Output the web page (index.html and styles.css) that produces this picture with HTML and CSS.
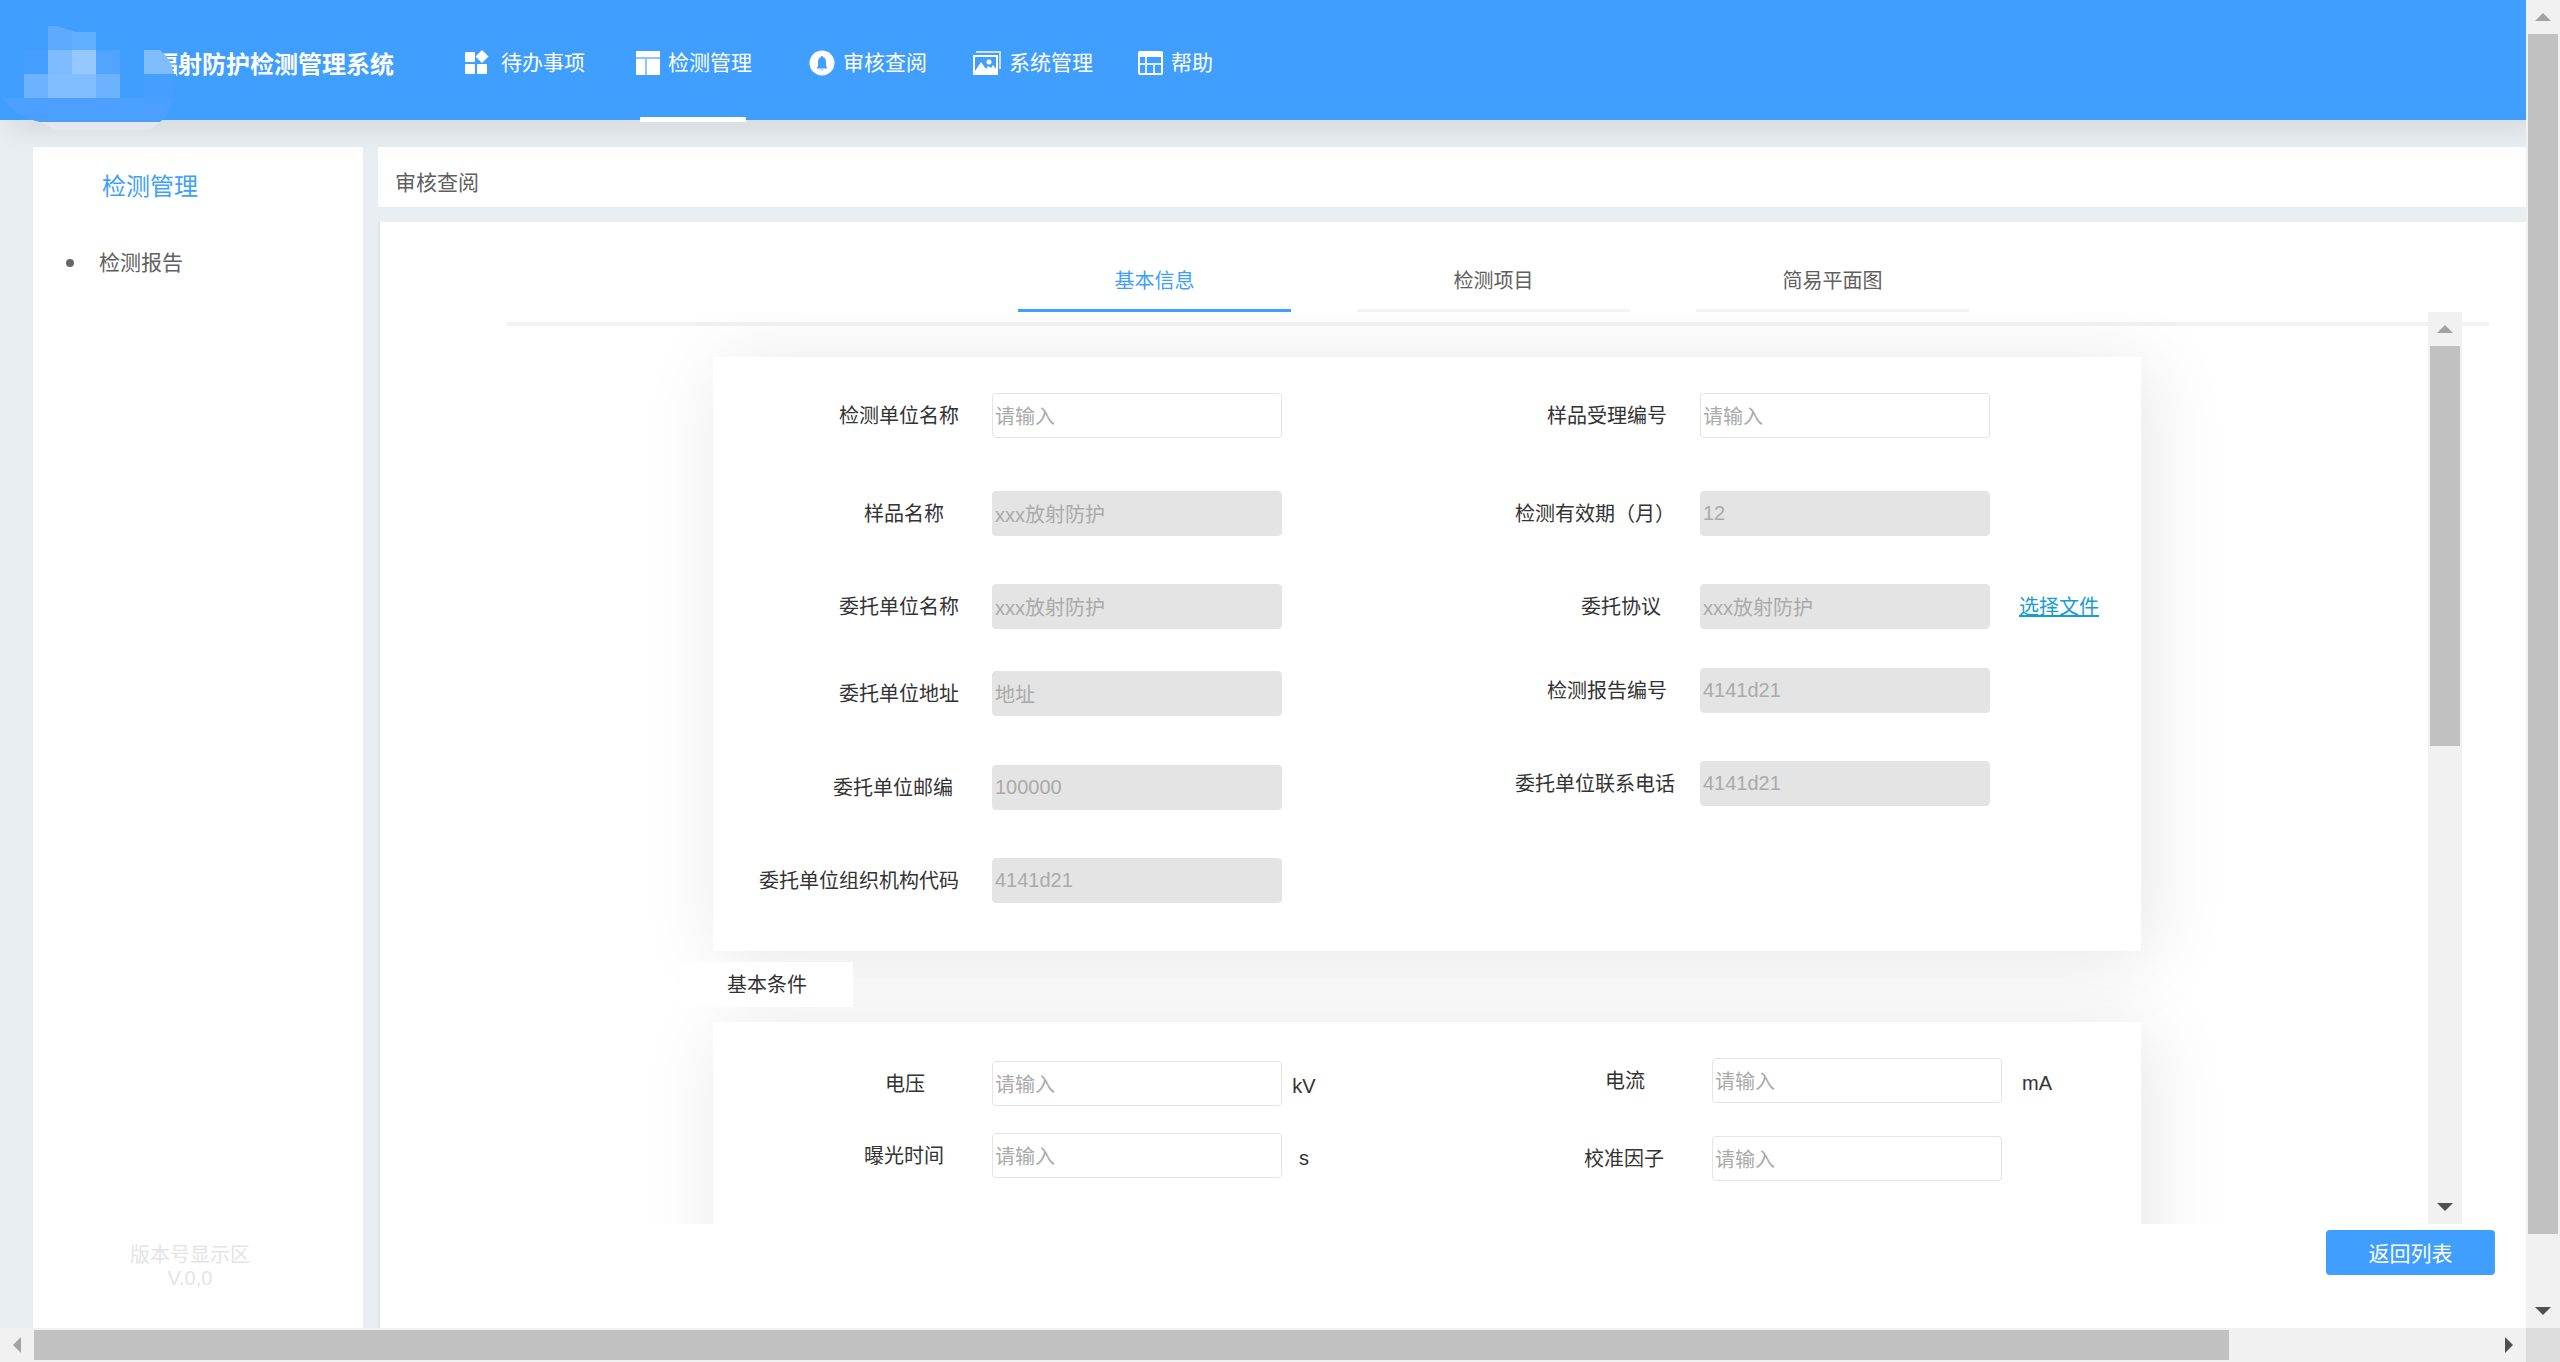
FILE: index.html
```html
<!DOCTYPE html>
<html lang="zh-CN">
<head>
<meta charset="utf-8">
<title>辐射防护检测管理系统</title>
<link rel="stylesheet" href="styles.css">
</head>
<body>
<div class="window">
  <div class="page">
    <header class="header">
      <h1 class="brand">辐射防护检测管理系统</h1>
      <svg class="brand-logo" width="176" height="132" viewBox="0 0 176 132" aria-hidden="true">
        <path d="M40 122h120l-10 8H56z" fill="#e4e8ee"/>
        <path d="M2 98h172c-2 10-7 18-14 24H40C24 119 10 110 2 98z" fill="#4b9ffe"/>
        <path d="M144 74h32q0 14-3 24h-29z" fill="#449fff"/>
        <path d="M48 26h8l20 6h20v18H48z" fill="#5cabff"/>
        <path d="M72 32h24v18H72z" fill="#60aeff"/>
        <path d="M24 50h24v24H24z" fill="#459fff"/>
        <path d="M48 50h24v24H48z" fill="#7fbcff"/>
        <path d="M72 50h24v24H72z" fill="#94c8ff"/>
        <path d="M96 50h24v24H96z" fill="#51a4ff"/>
        <path d="M24 74h24v24H24z" fill="#6cb2ff"/>
        <path d="M48 74h48v24H48z" fill="#81beff"/>
        <path d="M96 74h24v24H96z" fill="#6cb2ff"/>
        <path d="M144 50h16q11 9 14 24h-30z" fill="#80bdff"/>
      </svg>
      <nav class="nav">
        <a class="nav-item" href="#">
          <svg class="nav-icon nav-icon-wide" width="26" height="26" viewBox="0 0 26 26" fill="#fff" aria-hidden="true"><rect x="0" y="2" width="10" height="10" rx="1"/><path d="M17 0l6.500 6.500-6.500 6.500-6.500-6.500z"/><rect x="0" y="14" width="10" height="10" rx="1"/><rect x="12" y="14" width="10" height="10" rx="1"/></svg>待办事项</a>
        <a class="nav-item nav-item-active" href="#">
          <svg class="nav-icon" width="24" height="26" viewBox="0 0 24 26" fill="#fff" aria-hidden="true"><path d="M0 1h24v6H0zM0 9h9v16H0zM11 9h13v16H11z"/><path d="M0 1h24v24H0z" opacity=".4"/></svg>检测管理</a>
        <a class="nav-item" href="#">
          <svg class="nav-icon" width="26" height="26" viewBox="0 0 26 26" aria-hidden="true"><circle cx="13" cy="13" r="12.500" fill="#fff"/><path d="M13 6c.8 0 1 .5 1 1 2 .7 3 2.500 3 5v4l1.500 2.500h-11L9 16v-4c0-2.500 1-4.300 3-5 0-.5.200-1 1-1zM11.500 19.500h3c0 1-3 1-3 0z" fill="#409eff"/></svg>审核查阅</a>
        <a class="nav-item" href="#">
          <svg class="nav-icon" width="28" height="26" viewBox="0 0 28 26" fill="none" stroke="#fff" aria-hidden="true"><path d="M3 2h24v17" stroke-width="2" stroke-opacity=".7"/><rect x="1" y="6" width="23" height="18" stroke-width="2"/><path d="M2 21l6-9 5 7 2-3 3 2 2-3 4 5v4H2z" fill="#fff" stroke="none"/><circle cx="16" cy="12" r="2.500" fill="#fff" stroke="none"/></svg>系统管理</a>
        <a class="nav-item" href="#">
          <svg class="nav-icon" width="25" height="26" viewBox="0 0 25 26" fill="none" stroke="#fff" stroke-width="2" aria-hidden="true"><rect x="1" y="2" width="23" height="22" rx="1"/><path d="M1 3h23v3H1z" fill="#fff"/><path d="M1 14h23M8 6v18M16 14v10" stroke-opacity=".8"/></svg>帮助</a>
      </nav>
    </header>

    <div class="body">
      <aside class="sidebar">
        <h2 class="sidebar-title">检测管理</h2>
        <ul class="menu"><li class="menu-item"><a class="menu-link" href="#">检测报告</a></li></ul>
        <p class="version">版本号显示区<br>V.0,0</p>
      </aside>

      <main class="main">
        <div class="crumb">审核查阅</div>
        <section class="panel">
          <div class="tabs" role="tablist">
            <button class="tab tab-active" type="button" role="tab">基本信息</button>
            <button class="tab" type="button" role="tab">检测项目</button>
            <button class="tab" type="button" role="tab">简易平面图</button>
          </div>

          <div class="scroll-area">
            <form class="scroll-view" id="report">
              <div class="card card-basic">
                <div class="col col-basic-left">
                  <div class="field"><label class="label" for="f1">检测单位名称</label><input class="input" id="f1" placeholder="请输入"></div>
                  <div class="field field-far"><label class="label" for="f2">样品名称</label><input class="input" id="f2" value="xxx放射防护" disabled></div>
                  <div class="field"><label class="label" for="f3">委托单位名称</label><input class="input" id="f3" value="xxx放射防护" disabled></div>
                  <div class="field"><label class="label" for="f4">委托单位地址</label><input class="input" id="f4" value="地址" disabled></div>
                  <div class="field field-mid"><label class="label" for="f5">委托单位邮编</label><input class="input" id="f5" value="100000" disabled></div>
                  <div class="field"><label class="label" for="f6">委托单位组织机构代码</label><input class="input" id="f6" value="4141d21" disabled></div>
                </div>
                <div class="col col-basic-right">
                  <div class="field"><label class="label" for="g1">样品受理编号</label><input class="input" id="g1" placeholder="请输入"></div>
                  <div class="field field-near"><label class="label" for="g2">检测有效期（月）</label><input class="input" id="g2" value="12" disabled></div>
                  <div class="field field-mid"><label class="label" for="g3">委托协议</label><input class="input" id="g3" value="xxx放射防护" disabled><a class="file-link" href="#">选择文件</a></div>
                  <div class="field"><label class="label" for="g4">检测报告编号</label><input class="input" id="g4" value="4141d21" disabled></div>
                  <div class="field field-near"><label class="label" for="g5">委托单位联系电话</label><input class="input" id="g5" value="4141d21" disabled></div>
                </div>
              </div>

              <h3 class="section-tag">基本条件</h3>

              <div class="card card-conditions">
                <div class="col col-cond-left">
                  <div class="field field-farther"><label class="label" for="h1">电压</label><input class="input" id="h1" placeholder="请输入"><span class="unit">kV</span></div>
                  <div class="field field-far"><label class="label" for="h2">曝光时间</label><input class="input" id="h2" placeholder="请输入"><span class="unit">s</span></div>
                </div>
                <div class="col col-cond-right">
                  <div class="field field-farther"><label class="label" for="k1">电流</label><input class="input" id="k1" placeholder="请输入"><span class="unit unit-wide">mA</span></div>
                  <div class="field field-far"><label class="label" for="k2">校准因子</label><input class="input" id="k2" placeholder="请输入"></div>
                </div>
              </div>
            </form>
            <div class="bar bar-y bar-inner" aria-hidden="true">
              <span class="arrow arrow-up"></span>
              <div class="track"><div class="thumb"></div></div>
              <span class="arrow arrow-down"></span>
            </div>
          </div>

          <div class="actions"><button class="back" type="button">返回列表</button></div>
        </section>
      </main>
    </div>
  </div>

  <div class="bar bar-y bar-page" aria-hidden="true">
    <span class="arrow arrow-up"></span>
    <div class="track"><div class="thumb"></div></div>
    <span class="arrow arrow-down"></span>
  </div>
  <div class="bar bar-x" aria-hidden="true">
    <span class="arrow arrow-left"></span>
    <div class="track"><div class="thumb"></div></div>
    <span class="arrow arrow-right"></span>
  </div>
  <div class="corner"></div>
</div>
</body>
</html>
```
FILE: styles.css
```css
* { box-sizing: border-box; }

body {
  margin: 0;
  background: #e9eef2;
  color: #333;
  font-family: "Liberation Sans", "Noto Sans CJK SC", sans-serif;
  font-size: 20px;
  line-height: 24px;
}

h1, h2, h3, p, ul { margin: 0; padding: 0; font-weight: 400; }
ul { list-style: none; }
a { color: inherit; text-decoration: none; }
button, input { font: inherit; }

.window {
  display: grid;
  grid-template: minmax(0, 1fr) 34px / minmax(0, 1fr) 34px;
  height: 100vh;
}

.page {
  display: flex;
  flex-direction: column;
  overflow: hidden;
}

/* Header */
.header {
  position: relative;
  display: flex;
  flex: none;
  height: 120px;
  padding-left: 154px;
  background: #409eff;
  box-shadow: 8px 8px 30px rgba(0, 0, 0, .1);
  color: #fff;
}

.brand {
  width: 311px;
  padding-top: 10px;
  font-size: 24px;
  font-weight: 700;
  line-height: 110px;
}

.brand-logo { position: absolute; top: 0; left: 0; }

.nav {
  display: grid;
  grid-template-columns: 171px 173px 164px 165px auto;
}

.nav-item {
  position: relative;
  display: flex;
  align-items: center;
  justify-self: start;
  gap: 8px;
  padding-top: 6px;
  font-size: 21px;
}

.nav-icon-wide { margin-right: 2px; }

.nav-item-active::after {
  content: "";
  position: absolute;
  right: 6px;
  bottom: -2px;
  left: 4px;
  height: 5px;
  border-radius: 1px;
  background: #fff;
}

/* Columns under the header */
.body {
  display: flex;
  flex: 1;
  gap: 15px;
  min-height: 0;
  padding: 27px 0 0 33px;
}

.sidebar {
  display: flex;
  flex: none;
  flex-direction: column;
  width: 330px;
  background: #fff;
}

.sidebar-title {
  padding: 28px 0 0 69px;
  color: #409eff;
  font-size: 24px;
}

.menu { padding-top: 52px; }

.menu-item {
  display: flex;
  align-items: center;
  gap: 25px;
  padding-left: 33px;
  color: #606060;
  font-size: 21px;
}

.menu-item::before {
  content: "";
  width: 8px;
  height: 8px;
  border-radius: 50%;
  background: #666;
}

.version {
  margin-top: auto;
  padding: 0 16px 38px 0;
  color: #e4e4e4;
  line-height: 23px;
  text-align: center;
}

.main {
  display: flex;
  flex: 1;
  flex-direction: column;
  gap: 15px;
  min-width: 0;
}

.crumb {
  flex: none;
  padding: 24px 17px 12px;
  background: #fff;
  color: #606060;
  font-size: 21px;
}

.panel {
  display: flex;
  flex: 1;
  flex-direction: column;
  min-height: 0;
  padding: 0 37px 53px 127px;
  border-left: 2px solid #e4e4e4;
  background: #fff;
}

.tabs {
  display: flex;
  flex: none;
  justify-content: center;
  gap: 66px;
  padding: 30px 9px 0 0;
}

.tab {
  width: 273px;
  padding: 17px 0 16px;
  border: 0;
  border-bottom: 3px solid #f2f2f2;
  background: none;
  color: #606060;
}

.tab-active { border-color: #409eff; color: #409eff; }

/* Scrolling form */
.scroll-area {
  position: relative;
  display: flex;
  flex: 1;
  min-height: 0;
  padding-right: 27px;
}

.scroll-area::before {
  content: "";
  position: absolute;
  top: 10px;
  right: 0;
  left: 0;
  height: 4px;
  background: #f2f2f2;
}

.scroll-view {
  position: relative;
  z-index: 0;
  flex: 1;
  overflow: hidden;
  padding: 45px 287px 0 206px;
}

.card {
  position: relative;
  display: flex;
  background: #fff;
}

.card::before {
  content: "";
  position: absolute;
  z-index: -1;
  inset: 0;
  box-shadow: 8px 8px 75px rgba(0, 0, 0, .1);
}

.card-basic { min-height: 594px; }
.card-conditions { min-height: 300px; }

.col { display: grid; align-content: start; }
.col-basic-left { width: 569px; padding-top: 36px; grid-template-rows: 98px 93px 87px 94px 93px auto; }
.col-basic-right { width: 708px; padding-top: 36px; grid-template-rows: 98px 93px 84px 93px auto; }
.col-cond-left { width: 569px; padding-top: 39px; grid-template-rows: 72px auto; }
.col-cond-right { width: 720px; padding-top: 36px; grid-template-rows: 78px auto; }

.field {
  display: grid;
  grid-template-columns: minmax(0, 1fr) 290px 0;
  align-items: center;
  align-self: start;
  white-space: nowrap;
}

.label { padding-right: 33px; text-align: right; }
.field-near .label { padding-right: 25px; }
.field-mid .label { padding-right: 39px; }
.field-far .label { padding-right: 48px; }
.field-farther .label { padding-right: 67px; }

.input {
  width: 290px;
  height: 45px;
  padding: 3px 2px 0;
  border: 1px solid #e4e4e4;
  border-radius: 4px;
  background: #fff;
  color: #333;
}

.input::placeholder { color: #aaa; opacity: 1; }
.input:disabled { padding-top: 0; background: #e4e4e4; color: #aaa; }

.unit { width: 44px; padding-top: 5px; text-align: center; }
.unit-wide { width: 70px; }

.file-link {
  padding-left: 29px;
  color: #169bd5;
  text-decoration: underline;
}

.section-tag {
  position: relative;
  width: 172px;
  margin: 11px 0 15px -32px;
  padding: 11px 0 10px 46px;
  background: #fff;
  font-size: 20px;
}

.actions {
  display: flex;
  flex: none;
  justify-content: flex-end;
  padding-top: 6px;
  margin-right: -6px;
}

.back {
  width: 169px;
  height: 45px;
  padding: 2px 0 0;
  border: 0;
  border-radius: 4px;
  background: #409eff;
  color: #fff;
  font-size: 21px;
}

/* Scroll bars */
.bar { display: flex; background: #f1f1f1; }
.bar-y { flex: none; flex-direction: column; width: 34px; }
.bar-inner { position: relative; }
.track { flex: 1; min-width: 0; min-height: 0; }
.thumb { background: #c1c1c1; }
.bar-y .track { padding: 0 2px; }
.bar-x .track { padding: 2px 0; }
.bar-page .thumb { height: 95.2%; }
.bar-inner .thumb { height: 47.4%; }
.bar-x .thumb { width: 89.3%; height: 100%; }
.corner { background: #dcdcdc; }

.arrow {
  display: grid;
  flex: none;
  place-content: center;
  width: 34px;
  height: 34px;
}

.arrow::before { content: ""; border: 8px solid transparent; }
.arrow-up::before { border-top: 0; border-bottom-color: #a3a3a3; }
.arrow-down::before { border-bottom: 0; border-top-color: #505050; }
.arrow-left::before { border-left: 0; border-right-color: #a3a3a3; }
.arrow-right::before { border-right: 0; border-left-color: #505050; }
```
